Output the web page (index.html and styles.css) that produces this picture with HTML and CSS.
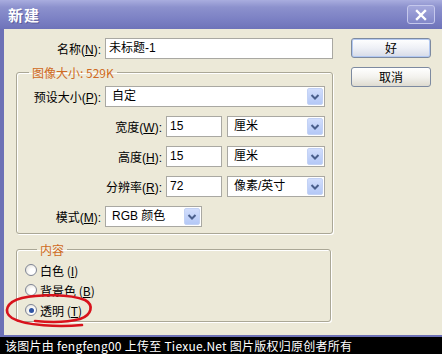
FILE: index.html
```html
<!DOCTYPE html>
<html>
<head>
<meta charset="utf-8">
<link rel="stylesheet" href="styles.css">
</head>
<body>
<div class="window">
  <div class="titlebar">
    <span class="title">新建</span>
    <span class="close"><svg width="14" height="12" viewBox="0 0 14 12"><path d="M3 2 L11 10 M11 2 L3 10" stroke="#fff" stroke-width="2.4" stroke-linecap="square"/></svg></span>
  </div>
  <div class="client">
    <div class="main">
      <div class="row">
        <span class="lbl lbl-a">名称(<u>N</u>):</span>
        <div class="field name">未标题-1</div>
      </div>
      <fieldset class="group size-group">
        <legend>图像大小: 529K</legend>
        <div class="row">
          <span class="lbl lbl-a">预设大小(<u>P</u>):</span>
          <div class="combo preset"><span class="val">自定</span><span class="arrow"><svg width="14" height="15" viewBox="0 0 14 15"><path d="M3.5 6 L7 9.5 L10.5 6" fill="none" stroke="#4a5f8c" stroke-width="2"/></svg></span></div>
        </div>
        <div class="row">
          <span class="lbl lbl-b">宽度(<u>W</u>):</span>
          <div class="field num">15</div>
          <div class="combo unit"><span class="val">厘米</span><span class="arrow"><svg width="14" height="15" viewBox="0 0 14 15"><path d="M3.5 6 L7 9.5 L10.5 6" fill="none" stroke="#4a5f8c" stroke-width="2"/></svg></span></div>
        </div>
        <div class="row">
          <span class="lbl lbl-b">高度(<u>H</u>):</span>
          <div class="field num">15</div>
          <div class="combo unit"><span class="val">厘米</span><span class="arrow"><svg width="14" height="15" viewBox="0 0 14 15"><path d="M3.5 6 L7 9.5 L10.5 6" fill="none" stroke="#4a5f8c" stroke-width="2"/></svg></span></div>
        </div>
        <div class="row">
          <span class="lbl lbl-b">分辨率(<u>R</u>):</span>
          <div class="field num">72</div>
          <div class="combo unit"><span class="val">像素/英寸</span><span class="arrow"><svg width="14" height="15" viewBox="0 0 14 15"><path d="M3.5 6 L7 9.5 L10.5 6" fill="none" stroke="#4a5f8c" stroke-width="2"/></svg></span></div>
        </div>
        <div class="row">
          <span class="lbl lbl-a">模式(<u>M</u>):</span>
          <div class="combo mode"><span class="val">RGB 颜色</span><span class="arrow"><svg width="14" height="15" viewBox="0 0 14 15"><path d="M3.5 6 L7 9.5 L10.5 6" fill="none" stroke="#4a5f8c" stroke-width="2"/></svg></span></div>
        </div>
      </fieldset>
      <fieldset class="group content-group">
        <legend>内容</legend>
        <div class="radio-row"><span class="radio"></span><span>白色 (<u>I</u>)</span></div>
        <div class="radio-row"><span class="radio"></span><span>背景色 (<u>B</u>)</span></div>
        <div class="radio-row"><span class="radio checked"></span><span>透明 (<u>T</u>)</span></div>
      </fieldset>
    </div>
    <div class="buttons">
      <div class="btn default">好</div>
      <div class="btn">取消</div>
    </div>
  </div>
  <div class="caption">该图片由 fengfeng00 上传至 Tiexue.Net 图片版权归原创者所有</div>
</div>
<svg class="scribble" width="442" height="354" viewBox="0 0 442 354">
  <path d="M82 325 C60 327, 25 326, 12 318 C3 312, 6 302, 22 298 C40 294, 70 294, 85 300 C94 305, 92 315, 80 319 C65 323, 45 322, 35 321" fill="none" stroke="#d8121c" stroke-width="2.6" stroke-linecap="round"/>
</svg>
</body>
</html>
```

FILE: styles.css
```css
html, body {
  margin: 0;
  padding: 0;
}
body {
  width: 442px;
  height: 354px;
  overflow: hidden;
  position: relative;
  background: #ECE9D8;
  font-family: "Liberation Sans", "Noto Sans CJK SC", sans-serif;
  font-size: 12px;
  color: #000;
}
.window {
  display: flex;
  flex-direction: column;
  height: 354px;
}
.titlebar {
  flex: none;
  height: 29px;
  box-sizing: border-box;
  display: flex;
  align-items: center;
  justify-content: space-between;
  padding: 0 7px 0 8px;
  background: linear-gradient(to bottom, #a9addf 0%, #8c91cd 25%, #7a7fc3 70%, #6e73b9 100%);
}
.title {
  color: #fff;
  font-family: "Noto Sans CJK SC", sans-serif;
  font-weight: bold;
  font-size: 15px;
  line-height: 1;
  letter-spacing: 1px;
  text-shadow: 1px 1px 0 rgba(60, 60, 120, 0.5);
}
.close {
  width: 28px;
  height: 19px;
  box-sizing: border-box;
  border: 1px solid #c5c8ec;
  border-radius: 3px;
  background: linear-gradient(to bottom, #a4a8dc, #8287c8);
  display: flex;
  align-items: center;
  justify-content: center;
}
.client {
  flex: none;
  height: 308px;
  box-sizing: border-box;
  display: flex;
  border-left: 4px solid #6d71b6;
  border-bottom: 2px solid #6d71b6;
  padding: 9px 11px 0 12px;
  background: #ECE9D8;
}
.main {
  width: 317px;
  display: flex;
  flex-direction: column;
}
.row {
  display: flex;
  align-items: center;
  height: 21px;
}
.lbl {
  flex: none;
  text-align: right;
  margin-right: 4px;
  white-space: nowrap;
}
.lbl-a { width: 84px; }
.main > .row .lbl-a { width: 85px; }
.lbl-b { width: 145px; }
.field {
  height: 21px;
  box-sizing: border-box;
  background: #fff;
  border: 1px solid #a9a8a2;
  padding-left: 3px;
  line-height: 19px;
  white-space: nowrap;
}
.field.name { width: 228px; }
.field.num { width: 56px; }
.combo {
  height: 21px;
  box-sizing: border-box;
  background: #fff;
  border: 1px solid #a9a8a2;
  display: flex;
  align-items: center;
  justify-content: space-between;
  padding: 1px;
}
.combo .val {
  padding-left: 5px;
  line-height: 17px;
  white-space: nowrap;
}
.combo.preset { width: 220px; }
.combo.unit { width: 98px; margin-left: 5px; }
.combo.mode { width: 97px; }
.arrow {
  width: 16px;
  height: 17px;
  box-sizing: border-box;
  border: 1px solid #c3d2f5;
  border-radius: 2px;
  background: linear-gradient(to bottom, #d2defc, #b4c8f6);
  display: flex;
  align-items: center;
  justify-content: center;
}
.group {
  margin: 0;
  padding: 0;
  min-width: 0;
  border: 1px solid #aaa796;
  border-radius: 3px;
  box-shadow: 1px 1px 0 #fff, inset 1px 1px 0 #fff;
  box-sizing: border-box;
}
.group legend {
  margin-left: 12px;
  padding: 0 3px;
  line-height: 13px;
  color: #cf6a22;
  font-family: "Noto Sans CJK SC", sans-serif;
}
.size-group {
  width: 317px;
  margin-top: 7px;
  padding: 7px 0 6px 0;
  display: flex;
  flex-direction: column;
  gap: 9px;
}
.content-group {
  width: 315px;
  margin-top: 9px;
  padding: 4px 0 1px 8px;
}
.radio-row {
  height: 20px;
  display: flex;
  align-items: center;
  gap: 3px;
  font-family: "Noto Sans CJK SC", sans-serif;
}
.radio {
  width: 12px;
  height: 12px;
  box-sizing: border-box;
  border-radius: 50%;
  border: 1px solid #7f8595;
  background: radial-gradient(circle at 65% 65%, #ffffff 30%, #dedbd2 100%);
  display: flex;
  align-items: center;
  justify-content: center;
}
.radio.checked::after {
  content: "";
  width: 5px;
  height: 5px;
  border-radius: 50%;
  background: #2f54a3;
}
.buttons {
  margin-left: 18px;
  width: 80px;
  display: flex;
  flex-direction: column;
  gap: 9px;
}
.btn {
  height: 20px;
  box-sizing: border-box;
  border: 1px solid #7d8aa0;
  border-radius: 3px;
  background: linear-gradient(to bottom, #ffffff 0%, #f3f2ee 50%, #dedbd0 100%);
  text-align: center;
  line-height: 18px;
  font-family: "Noto Sans CJK SC", sans-serif;
}
.btn.default {
  box-shadow: inset 0 0 0 1px #b3c9f2;
  background: linear-gradient(to bottom, #ffffff 0%, #eef0f6 50%, #d6dbe8 100%);
}
.caption {
  flex: none;
  height: 17px;
  background: #000;
  color: #fff;
  font-family: "Noto Sans CJK SC", sans-serif;
  font-size: 12px;
  line-height: 17px;
  padding-left: 5px;
  letter-spacing: 0.25px;
  white-space: nowrap;
}
.scribble {
  position: absolute;
  left: 0;
  top: 0;
  pointer-events: none;
}
```
